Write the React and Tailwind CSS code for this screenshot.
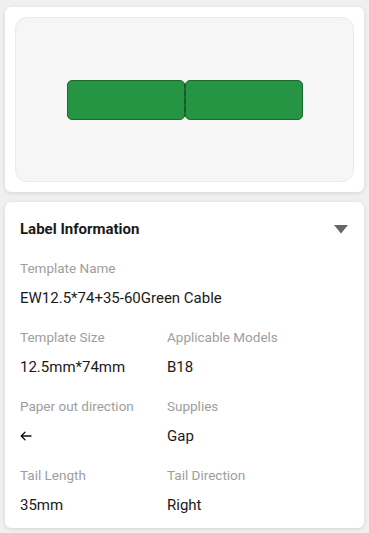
import React from "react";

function Field({ label, children }) {
  return (
    <div className="flex flex-col">
      <div className="text-[13.5px] leading-[18px] text-[#9e9e9e]">{label}</div>
      <div className="mt-[11px] text-[15px] leading-[20px] text-[#1a1a1a]">{children}</div>
    </div>
  );
}

export default function App() {
  return (
    <div
      className="min-h-[533px] w-[369px] bg-[#f0f0f0] pt-[7px] px-[5px]"
      style={{ fontFamily: "Roboto, 'Noto Sans', sans-serif" }}
    >
      <div className="rounded-[6px] bg-white p-[10px] shadow-[0_1px_4px_rgba(0,0,0,0.12)]">
        <div className="flex h-[165px] items-center justify-center rounded-[12px] border border-[#ebebeb] bg-[#f6f6f6]">
          <div className="relative flex">
            <div className="h-[40px] w-[118px] rounded-[5px] border border-[#1c6a2e] bg-[#259443]" />
            <div className="h-[40px] w-[118px] rounded-[5px] border border-[#1c6a2e] bg-[#259443]" />
            <svg className="absolute left-[117px] top-[3px]" width="2" height="34" viewBox="0 0 2 34">
              <line x1="1" y1="0" x2="1" y2="34" stroke="#17502a" strokeWidth="1.2" strokeDasharray="5 3" />
            </svg>
          </div>
        </div>
      </div>

      <div className="mt-[10px] rounded-[6px] bg-white px-[15px] pt-[17px] pb-[13px] shadow-[0_1px_4px_rgba(0,0,0,0.12)]">
        <div className="flex h-[20px] items-center justify-between">
          <div className="text-[15px] font-bold leading-[20px] text-[#1a1a1a]">Label Information</div>
          <svg width="14" height="9" viewBox="0 0 14 9" className="mr-[1px]">
            <polygon points="0,0 14,0 7,8.5" fill="#666666" />
          </svg>
        </div>

        <div className="mt-[20px]">
          <Field label="Template Name">EW12.5*74+35-60Green Cable</Field>
        </div>

        <div className="mt-[20px] grid grid-cols-[147px_1fr] gap-y-[20px]">
          <Field label="Template Size">12.5mm*74mm</Field>
          <Field label="Applicable Models">B18</Field>
          <Field label="Paper out direction">
            <div className="flex h-[20px] items-center">
              <svg width="12" height="10" viewBox="0 0 12 10" fill="none" stroke="#111" strokeWidth="1.3" strokeLinecap="round" strokeLinejoin="round">
                <path d="M11 5H1.5M5 1.2L1.2 5L5 8.8" />
              </svg>
            </div>
          </Field>
          <Field label="Supplies">Gap</Field>
          <Field label="Tail Length">35mm</Field>
          <Field label="Tail Direction">Right</Field>
        </div>
      </div>
    </div>
  );
}
